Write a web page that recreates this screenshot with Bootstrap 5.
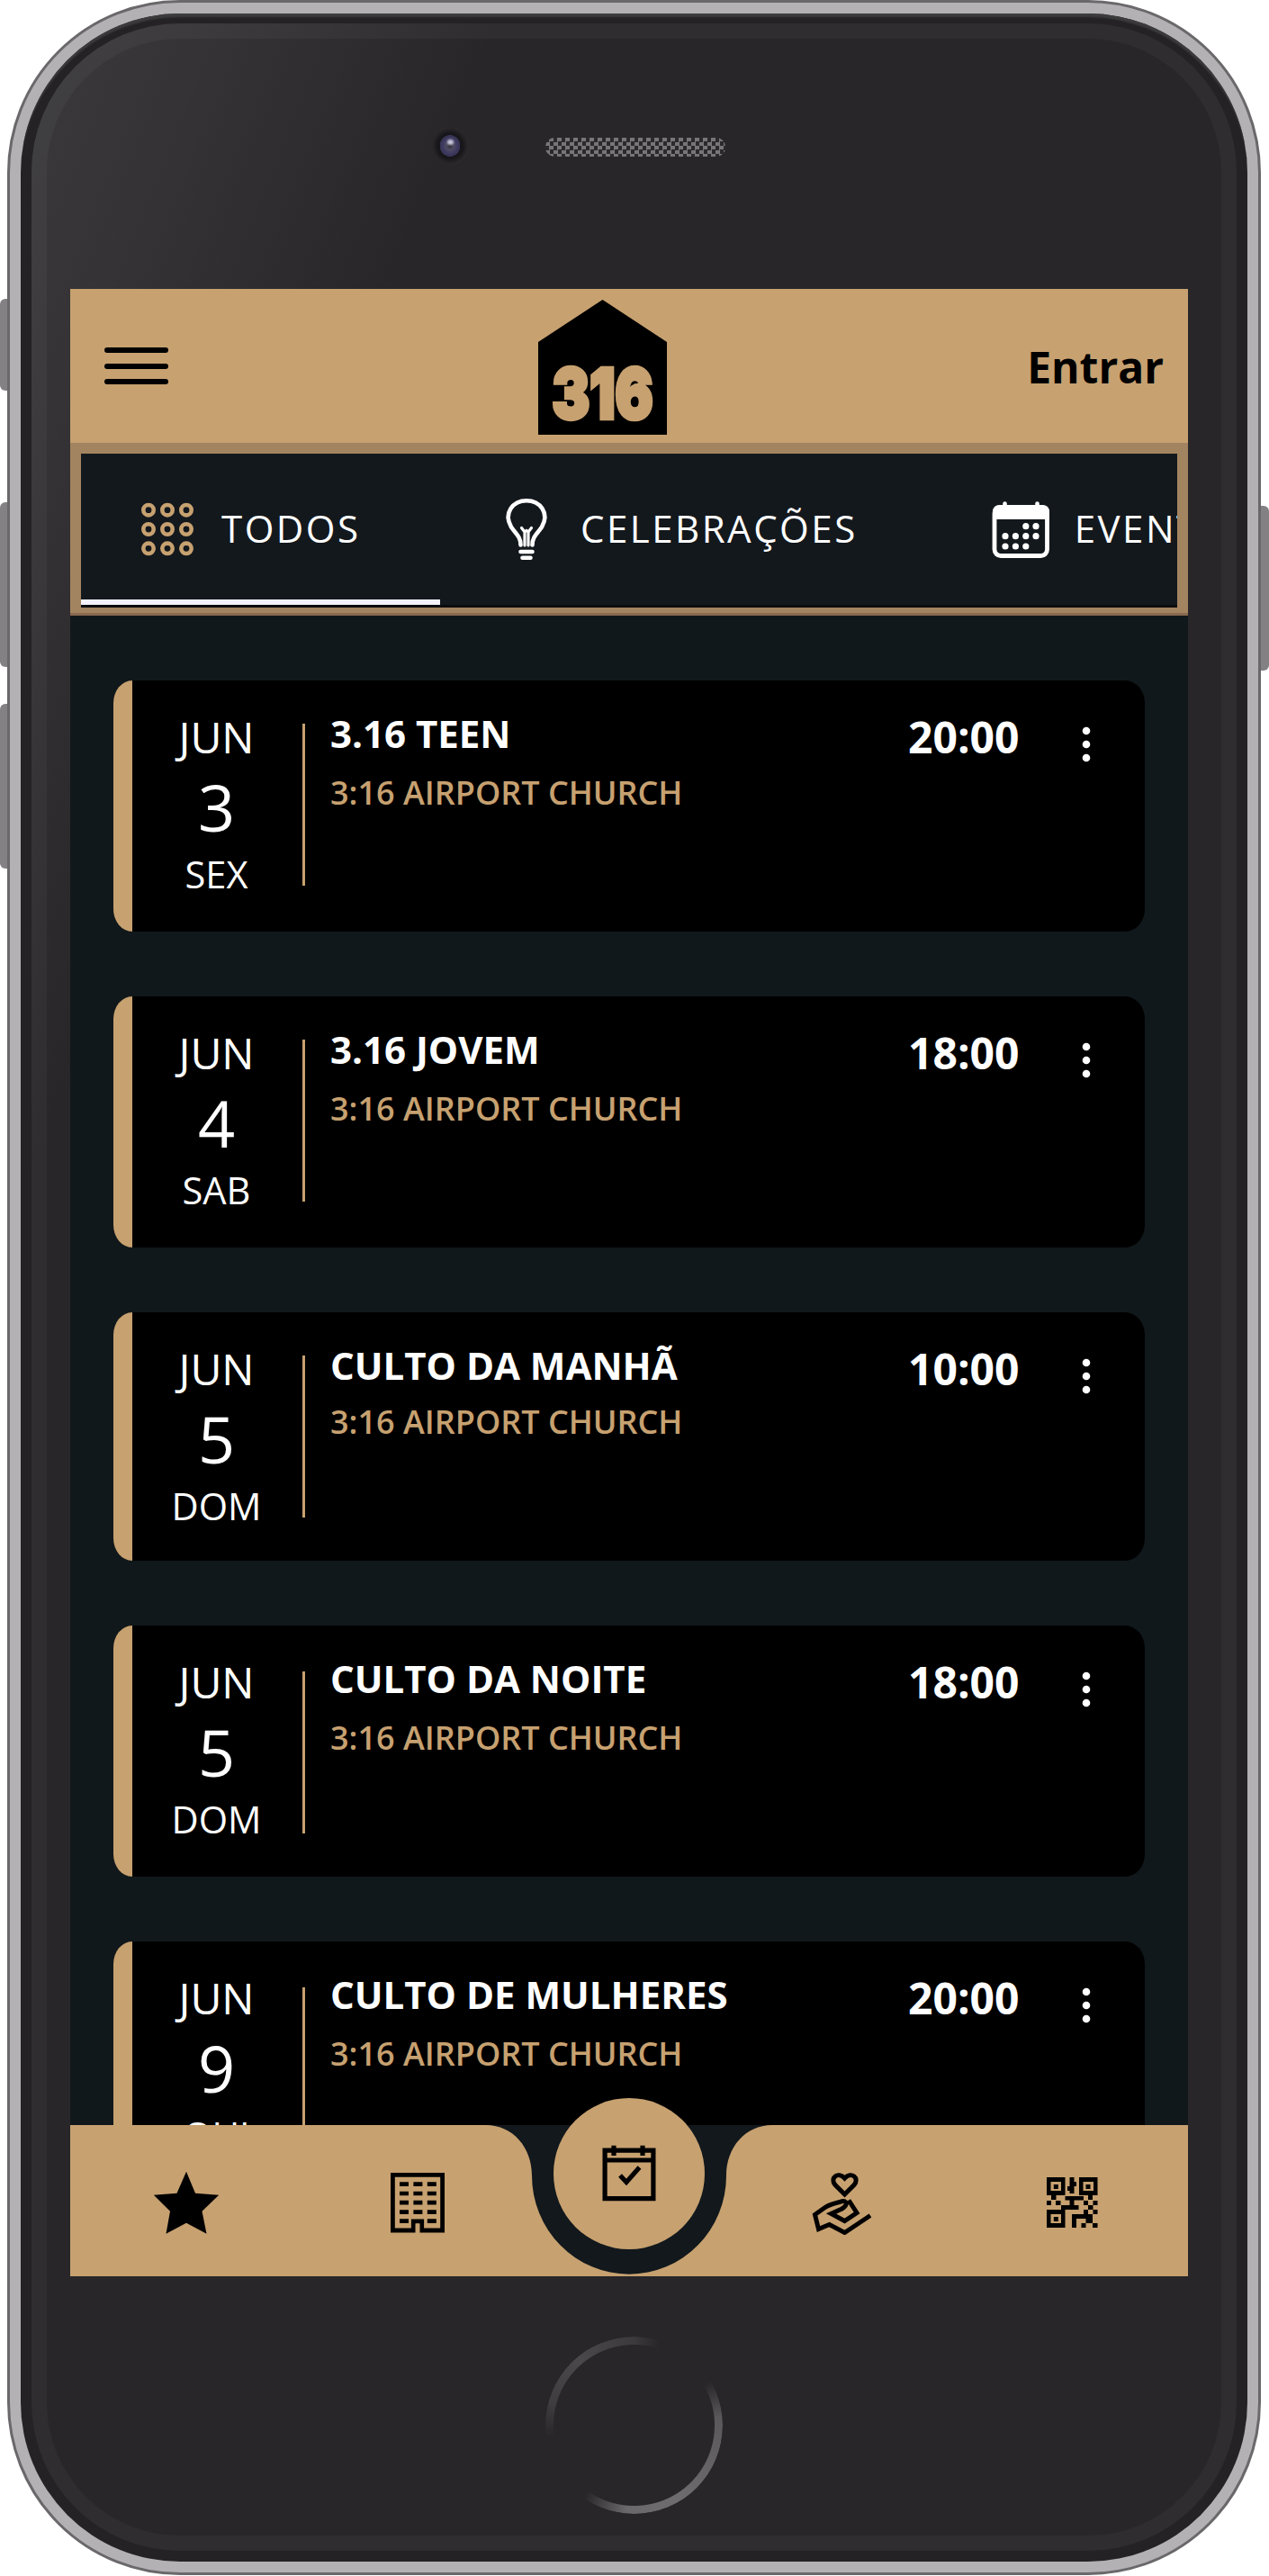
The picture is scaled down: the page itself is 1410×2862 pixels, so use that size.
<!DOCTYPE html>
<html lang="pt-BR">
<head>
    <meta charset="UTF-8">
    <meta name="viewport" content="width=device-width, initial-scale=1.0">
    <link rel="stylesheet" href="https://cdn.jsdelivr.net/npm/bootstrap@5.3.3/dist/css/bootstrap.min.css">
    <title>3:16 Church - Agenda</title>
    <style>
        :root {
            --gold: #c7a170;
            --night: #12181c;
        }
        body {
            width: 1410px;
            background-color: #fff;
            font-family: "Open Sans", "Noto Sans", sans-serif;
            overflow: hidden;
        }

        /* phone frame */
        .phone {
            width: 1410px;
            height: 2862px;
            padding: 0 9px 0 8px;
        }
        .side-key {
            position: absolute;
            width: 12px;
            background-color: #838183;
        }
        .key-left { left: 0; border-radius: 6px 0 0 6px; }
        .key-right { right: 0; border-radius: 0 6px 6px 0; }
        .key-mute { top: 332px; height: 102px; }
        .key-up { top: 558px; height: 183px; }
        .key-down { top: 782px; height: 183px; }
        .key-power { top: 562px; height: 183px; }
        .shell {
            height: 2861px;
            padding: 12px;
            border: 3px solid #6a686a;
            border-radius: 192px;
            background-color: #b3b1b4;
        }
        .bezel {
            height: 100%;
            padding: 11px 12px 12px;
            border-radius: 177px;
            background-color: #242225;
            box-shadow: inset 0 5px 2px -1px #3d3c3d;
        }
        .face {
            height: 100%;
            padding: 0 19px 0 26px;
            border: 17px solid rgba(255, 255, 255, .035);
            border-radius: 165px;
            background: linear-gradient(112deg, #3b393c 0, #353336 180px, #282629 480px) border-box;
        }
        .top-face { height: 278px; }
        .lens {
            width: 42px;
            height: 42px;
            margin: 98px 85px 0 401px;
            border-radius: 50%;
            background: radial-gradient(ellipse 11.5px 12px at 21px 21px, #2b2930 0, #4f4b62 35%, #3d3860 75%, #36324f 98%, #17161a 100%, transparent 0) , radial-gradient(circle, #17161a 14px, #211f22 17px, #2c2a2d 21px);
        }
        .lens::before {
            content: "";
            display: block;
            width: 7px;
            height: 6px;
            margin: 14px 0 0 18px;
            border-radius: 50%;
            background-color: #c9c6dc;
            filter: blur(1px);
        }
        .speaker {
            width: 200px;
            height: 21px;
            margin-top: 110px;
            border-radius: 10px;
            background: repeating-conic-gradient(#777577 0 25%, #2b292c 0 50%) 0 0 / 9px 9px;
        }
        .home-ring {
            width: 197px;
            height: 197px;
            margin: 67px 0 0 528px;
            border-radius: 50%;
            background: conic-gradient(#3c3a3d 0, #282629 17deg, #282629 60deg, #5a585b 85deg, #6e6c6f 150deg, #6a686b 185deg, #282629 215deg, #282629 262deg, #3f3d40 285deg, #4a484b 320deg, #3c3a3d 360deg);
            -webkit-mask: radial-gradient(circle, transparent 89px, #000 90px);
            mask: radial-gradient(circle, transparent 89px, #000 90px);
        }

        /* app screen */
        .screen {
            width: 1242px;
            height: 2208px;
            background-color: var(--night);
        }
        .app-header {
            height: 171px;
            padding: 0 27px 0 38px;
            background-color: var(--gold);
        }
        .menu-btn {
            width: 71px;
            padding: 0;
            border: 0;
            background: none;
            gap: 11.5px;
        }
        .menu-btn span {
            height: 6px;
            border-radius: 3px;
            background-color: #000;
        }
        .logo { margin-left: 11px; margin-top: 3px; }
        .logo text {
            font-family: Inter, sans-serif;
            font-weight: 900;
            font-size: 77px;
            fill: var(--gold);
            stroke: var(--gold);
            stroke-width: 4.5px;
        }
        .login-link {
            padding-top: 3px;
            color: #000;
            font-size: 48px;
            line-height: 60px;
            font-weight: 700;
            text-decoration: none;
        }
        .tabs-frame {
            height: 192px;
            padding: 12px 12px 6px;
            border-bottom: 3px solid #89694f;
            background-color: #a38460;
        }
        .tab-strip {
            height: 171px;
            border-bottom: 3px solid #0b0c0e;
            background-color: #13181d;
            overflow: hidden;
        }
        .tab-item {
            padding: 6px 85px 0 67px;
            border-bottom: 6px solid transparent;
            color: #fff;
            font-size: 42px;
            letter-spacing: 2.5px;
            gap: 31px;
        }
        .tab-item.active { border-bottom-color: #f4f3fb; width: 399px; }
        .tab-item svg { flex: none; }
        .tab-item span { margin-top: -3px; }

        /* agenda */
        .agenda {
            flex: 1 1 0;
            padding: 72px 48px 0;
            background-color: #11181b;
            overflow: hidden;
        }
        .event {
            height: 279px;
            margin-bottom: 72px;
            border-left: 21px solid var(--gold);
            border-radius: 21px 22px 22px 21px / 25px;
            background-color: #000;
            color: #fff;
        }
        .event-date { width: 189px; padding: 30px 2px 0 0; }
        .event-month { font-size: 48px; line-height: 66px; }
        .event-day { font-size: 72px; line-height: 89px; }
        .event-week { font-size: 41.6px; line-height: 60px; }
        .event-line {
            width: 3px;
            height: 180px;
            margin-top: 48px;
            background-color: var(--gold);
        }
        .event-info { padding: 29px 0 0 28px; }
        .event-title { font-size: 42px; line-height: 60px; font-weight: 700; }
        .event-place { font-size: 36px; line-height: 71px; font-weight: 600; color: var(--gold); }
        .event-time { padding-top: 33px; font-size: 48px; line-height: 60px; font-weight: 700; }
        .event-more { width: 10px; margin: 51px 60px 0 69.5px; }
        .event:nth-child(3) { height: 276px; }
        .event:nth-child(3) .event-place { line-height: 65px; }
        .event:nth-child(n+4) .event-line { margin-top: 51px; }

        /* bottom bar */
        .bottom-bar { height: 168px; background-color: var(--night); }
        .bar-shape { position: absolute; left: 0; top: 0; }
        .bar-item { width: 257px; padding-top: 4px; position: relative; }
        .bar-center { width: 214px; position: relative; }
        .fab {
            width: 168px;
            height: 168px;
            margin-top: -60px;
            border-radius: 50%;
            background-color: var(--gold);
        }
    </style>
</head>
<body>
    <div class="phone position-relative">
        <div class="side-key key-left key-mute"></div>
        <div class="side-key key-left key-up"></div>
        <div class="side-key key-left key-down"></div>
        <div class="side-key key-right key-power"></div>

        <div class="shell position-relative">
            <div class="bezel">
                <div class="face d-flex flex-column">
                    <div class="top-face d-flex align-items-start flex-shrink-0">
                        <div class="lens overflow-hidden"></div>
                        <div class="speaker"></div>
                    </div>

                    <div class="screen d-flex flex-column flex-shrink-0">
                        <header class="app-header d-flex align-items-center justify-content-between flex-shrink-0">
                            <button class="menu-btn d-flex flex-column" type="button" aria-label="Menu">
                                <span class="w-100"></span><span class="w-100"></span><span class="w-100"></span>
                            </button>
                            <svg class="logo" width="144" height="150" viewBox="0 0 144 150">
                                <path d="M71.5 0 143 47V150H0V47Z"/>
                                <text x="15.500" y="132" textLength="112" lengthAdjust="spacingAndGlyphs">316</text>
                            </svg>
                            <a class="login-link" href="#">Entrar</a>
                        </header>

                        <div class="tabs-frame flex-shrink-0">
                            <nav class="tab-strip d-flex">
                                <div class="tab-item active d-flex align-items-center flex-shrink-0">
                                    <svg width="58" height="70" viewBox="0 0 58 70" fill="none" stroke="#c7a170" stroke-width="4.6">
                                        <circle cx="8" cy="13.7" r="5.7"/><circle cx="29" cy="13.7" r="5.7"/><circle cx="50" cy="13.7" r="5.7"/>
                                        <circle cx="8" cy="35" r="5.7"/><circle cx="29" cy="35" r="5.7"/><circle cx="50" cy="35" r="5.7"/>
                                        <circle cx="8" cy="56.3" r="5.7"/><circle cx="29" cy="56.3" r="5.7"/><circle cx="50" cy="56.3" r="5.7"/>
                                    </svg>
                                    <span>TODOS</span>
                                </div>
                                <div class="tab-item d-flex align-items-center flex-shrink-0">
                                    <svg width="58" height="70" viewBox="0 0 58 70" fill="none" stroke="#fff" stroke-width="4.6" stroke-linecap="round">
                                        <path d="M22.500 52.500C22.500 43 17 40 12 32.500C3 17 14 3.300 29 3.300S55 17 46 32.500C41 40 35.500 43 35.500 52.500"/>
                                        <path d="M27 53V38L23.500 33.500M31 53V38L34.500 33.500M27 38L29 36.500L31 38" stroke-width="3.200"/>
                                        <path d="M22.500 60H35.500M24.500 66.700H33.500"/>
                                    </svg>
                                    <span>CELEBRAÇÕES</span>
                                </div>
                                <div class="tab-item d-flex align-items-center flex-shrink-0">
                                    <svg width="58" height="70" viewBox="0 0 58 70" overflow="visible">
                                        <rect x="0" y="10.500" width="58.500" height="54" rx="7" fill="none" stroke="#fff" stroke-width="4.800"/>
                                        <path d="M-2 24V16Q-2 8 6 8H53Q61 8 61 16V24Z" fill="#fff"/>
                                        <path d="M11.500 12V6.500M47.500 12V6.500" stroke="#fff" stroke-width="4.600" stroke-linecap="round"/>
                                        <g fill="#fff">
                                            <circle cx="34.800" cy="31.700" r="3.600"/><circle cx="46" cy="31.700" r="3.600"/>
                                            <circle cx="12" cy="42.700" r="3.600"/><circle cx="23.400" cy="42.700" r="3.600"/><circle cx="34.800" cy="42.700" r="3.600"/><circle cx="46" cy="42.700" r="3.600"/>
                                            <circle cx="12" cy="54" r="3.600"/><circle cx="23.400" cy="54" r="3.600"/><circle cx="34.800" cy="54" r="3.600"/>
                                        </g>
                                    </svg>
                                    <span>EVENTOS</span>
                                </div>
                            </nav>
                        </div>

                        <main class="agenda" id="agenda"></main>

                        <nav class="bottom-bar d-flex align-items-center position-relative flex-shrink-0">
                            <svg class="bar-shape" width="1242" height="168" viewBox="0 0 1242 168">
                                <path fill="#c7a170" d="M0 0H462C492 0 513 25 513 56A108 109.700 0 0 0 729 56C729 25 750 0 780 0H1242V168H0Z"/>
                            </svg>
                            <a class="bar-item d-flex justify-content-center" href="#" aria-label="Destaques">
                                <svg width="74" height="72" viewBox="0 0 74 72">
                                    <path d="M37 1.700 47 25.700 73.200 27.700 54.500 45.700 59.500 70.700 37 58.700 14.500 70.700 19 45.700.8 27.700 26.500 25.700Z"/>
                                </svg>
                            </a>
                            <a class="bar-item d-flex justify-content-center" href="#" aria-label="Igreja">
                                <svg width="62" height="68" viewBox="0 0 62 68">
                                    <path fill="none" stroke="#000" stroke-width="4.800" d="M26.300 65V55H35.700V65H58.600V3.400H3.400V65H28.700M33.300 65H38"/>
                                    <path stroke="#000" stroke-width="4.700" stroke-dasharray="10 5.400" d="M11 13.700H52M11 24H52M11 34.200H52M11 44.700H52M11 54.700H21M41.800 54.700H52"/>
                                    <path stroke="#c7a170" stroke-width="4.600" d="M31 57.400V68"/>
                                </svg>
                            </a>
                            <div class="bar-center d-flex justify-content-center">
                                <a class="fab d-flex align-items-center justify-content-center" href="#" aria-label="Agenda">
                                    <svg width="60" height="64" viewBox="0 0 60 64" fill="none" stroke="#000" stroke-width="5.200">
                                        <path d="M3.100 6.100H56.900V59.600H3.100ZM3 17H57M13 .8V12M45 .8V12"/>
                                        <path d="M20 34 27 41.500 41.500 25"/>
                                    </svg>
                                </a>
                            </div>
                            <a class="bar-item d-flex justify-content-center" href="#" aria-label="Doações">
                                <svg width="66" height="72" viewBox="0 0 66 72" fill="none" stroke="#000" stroke-width="5">
                                    <path d="M36.500 27 26 16.500C19.500 9 29 1 36.500 9C44 1 53.500 9 47 16.500Z"/>
                                    <path d="M41 33.500 50 47.500 36.500 56.500 21.500 48.500 33.500 43Q40 39 37.500 35.500Q36 33.500 31 35.500Q20 38 14 42L3.500 49.500 7.500 65.500 19.500 60.500 36.500 69.500 65 50.500"/>
                                </svg>
                            </a>
                            <a class="bar-item d-flex justify-content-center" href="#" aria-label="QR Code">
                                <svg width="57" height="56" viewBox="0 0 57 56">
                                    <path fill-rule="evenodd" d="M0 0H20.500V20H0ZM4.500 5V15H16V5ZM36 0H56.500V20H36ZM40.500 5V15H52V5ZM0 36H20.500V56H0ZM4.500 41V51H16V41Z"/>
                                    <path d="M7.800 8H12.800V13H7.800ZM43.500 8H48.500V13H43.500ZM7.800 44H12.800V49H7.800Z"/>
                                    <path d="M25.500 0H30.500V5H33V10H30.500V18H25.500V15H23V10H25.500ZM5 20H10.500V25H5ZM46 20H51V25H46ZM20.500 21H41V25.500H30.500V31H35.500V36H16V31H25.500V25.500H20.500ZM0 26H5V31H0ZM10 26H15.500V31H10ZM41 26H46V31H41ZM51.500 26H56.500V31H51.500ZM46 31H51.500V36H46ZM41 36H46V41H41ZM51.500 36H56.500V41H51.500ZM28 41H51V51H43.500V46H33V56H28ZM38.500 51H43.500V56H38.500ZM51 51H56.500V56H51Z"/>
                                </svg>
                            </a>
                        </nav>
                    </div>

                    <div class="home-ring flex-shrink-0"></div>
                </div>
            </div>
        </div>
    </div>

    <script src="https://cdn.jsdelivr.net/npm/bootstrap@5.3.3/dist/js/bootstrap.bundle.min.js"></script>
    <script>
        const events = [
            { month: 'JUN', day: 3, week: 'SEX', title: '3.16 TEEN', time: '20:00' },
            { month: 'JUN', day: 4, week: 'SAB', title: '3.16 JOVEM', time: '18:00' },
            { month: 'JUN', day: 5, week: 'DOM', title: 'CULTO DA MANHÃ', time: '10:00' },
            { month: 'JUN', day: 5, week: 'DOM', title: 'CULTO DA NOITE', time: '18:00' },
            { month: 'JUN', day: 9, week: 'QUI', title: 'CULTO DE MULHERES', time: '20:00' }
        ];

        document.getElementById('agenda').innerHTML = events.map(e => `
            <article class="event d-flex align-items-start">
                <div class="event-date text-center">
                    <div class="event-month">${e.month}</div>
                    <div class="event-day">${e.day}</div>
                    <div class="event-week">${e.week}</div>
                </div>
                <div class="event-line"></div>
                <div class="event-info flex-fill">
                    <div class="event-title">${e.title}</div>
                    <div class="event-place">3:16 AIRPORT CHURCH</div>
                </div>
                <div class="event-time">${e.time}</div>
                <svg class="event-more" height="40" viewBox="0 0 10 40" fill="#fff">
                    <circle cx="5" cy="5" r="4.300"/><circle cx="5" cy="20" r="4.300"/><circle cx="5" cy="35" r="4.300"/>
                </svg>
            </article>`).join('');
    </script>
</body>
</html>
